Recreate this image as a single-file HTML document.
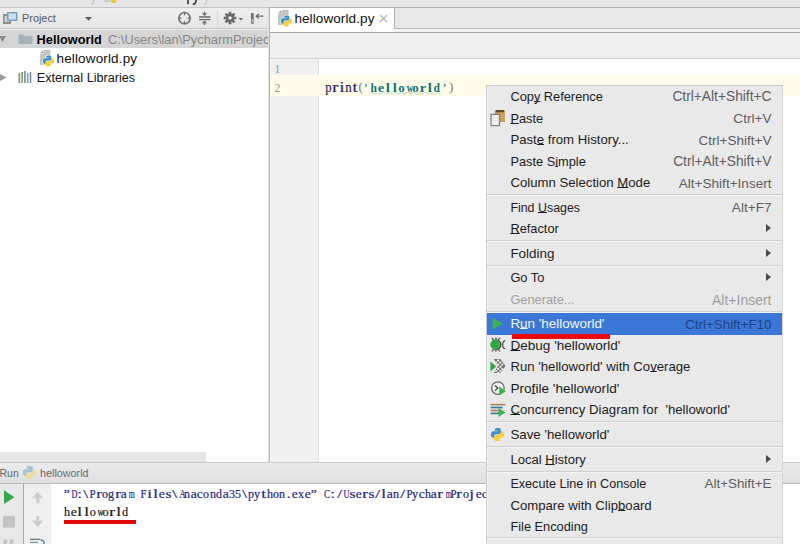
<!DOCTYPE html>
<html><head><meta charset="utf-8">
<style>
*{margin:0;padding:0;box-sizing:border-box}
html,body{width:800px;height:544px;overflow:hidden;background:#fff;font-family:"Liberation Sans",sans-serif}
.a{position:absolute}
.t{position:absolute;white-space:nowrap;line-height:20px;height:20px}
.ml{font-size:12.8px}
.ms{font-size:13.2px}
.m{font-family:"Liberation Mono",monospace}
.s{font-family:"Liberation Serif",serif}
.mc i{display:inline-block;text-align:center;font-style:normal}
.mc b{display:inline-block;font-weight:inherit;transform-origin:50% 50%}
u{text-decoration:underline;text-decoration-thickness:1px;text-underline-offset:0px;text-decoration-skip-ink:none}
.arr{width:0;height:0;border-left:5px solid #4a4a4a;border-top:4.5px solid transparent;border-bottom:4.5px solid transparent}
svg{position:absolute;overflow:visible}
</style></head><body>

<svg width="0" height="0" style="position:absolute">
<defs>
<symbol id="py" viewBox="0 0 16 16">
<path d="M8 1C5 1 5.2 2.3 5.2 2.3V4H8.1V4.6H3.5C3.5 4.6 1 4.3 1 8C1 11.7 3.2 11.5 3.2 11.5H4.5V9.8C4.5 9.8 4.4 7.6 6.7 7.6H9.5C9.5 7.6 11.6 7.7 11.6 5.5V2.7C11.6 2.7 12 1 8 1Z" fill="#4492c2"/>
<path d="M8 15C11 15 10.8 13.7 10.8 13.7V12H7.9V11.4H12.5C12.5 11.4 15 11.7 15 8C15 4.3 12.8 4.5 12.8 4.5H11.5V6.2C11.5 6.2 11.6 8.4 9.3 8.4H6.5C6.5 8.4 4.4 8.3 4.4 10.5V13.3C4.4 13.3 4 15 8 15Z" fill="#f7cf33"/>
</symbol>
<symbol id="pyf" viewBox="0 0 15 16" overflow="visible">
<path d="M0 3.5L3.5 0H10.5V15H0Z" fill="#c4c4c4"/>
<path d="M0 3.5H3.5V0Z" fill="#9a9a9a"/>
<path d="M0 3.5H3.5V0" fill="none" stroke="#fff" stroke-width="0.6"/>
<g transform="translate(2.2 4.6) scale(0.7875)"><use href="#py" width="16" height="16" stroke="#fff" stroke-width="1.6" stroke-opacity="0.8"/><use href="#py" width="16" height="16"/></g>
</symbol>
<pattern id="chk" width="2.4" height="2.4" patternUnits="userSpaceOnUse" patternTransform="rotate(45)">
<rect width="2.4" height="2.4" fill="#f4f4f4"/><rect width="1.2" height="1.2" fill="#5e5e5e"/><rect x="1.2" y="1.2" width="1.2" height="1.2" fill="#5e5e5e"/>
</pattern>
</defs>
</svg>
<!-- top strip -->
<div class="a" style="left:0;top:0;width:800px;height:8px;background:#e7e7e7"></div>
<div class="a" style="left:0;top:7px;width:269px;height:1px;background:#c4c4c4"></div><div class="a" style="left:269px;top:7px;width:531px;height:1px;background:#b0b0b0"></div>
<svg style="left:0;top:0" width="800" height="8">
<path d="M94.5 -1 L92 5" stroke="#b5b5b5" stroke-width="1" fill="none"/>
<rect x="104" y="0" width="6" height="2.2" fill="#cdcdcd"/>
<circle cx="113.5" cy="0.3" r="2.9" fill="#f3c232"/>
<path d="M188 0 v4.3" stroke="#2a2a2a" stroke-width="1.5"/>
<path d="M196.2 0 q-0.4 4.3 -3.4 4.3" stroke="#2a2a2a" stroke-width="1.5" fill="none"/>
<path d="M207.5 -1 L205 5" stroke="#b8b8b8" stroke-width="1" fill="none"/>
</svg>

<!-- project header -->
<div class="a" style="left:0;top:8px;width:269px;height:21px;background:linear-gradient(#eeeeee,#e4e4e4)"></div>
<div class="a" style="left:0;top:28px;width:269px;height:1px;background:#c4c4c4"></div>
<div class="a" style="left:0;top:29px;width:269px;height:1px;background:#eeeeee"></div>
<svg style="left:0;top:8px" width="269" height="21">
<!-- project icon -->
<rect x="3" y="6" width="8" height="10" fill="#8d8d8d"/>
<rect x="4.5" y="8" width="4.5" height="6" fill="#cfcfcf"/>
<rect x="7" y="4" width="10.5" height="9" fill="#7aa2b9"/>
<rect x="8.5" y="5.5" width="7.5" height="6" fill="#c9dfea"/>
<!-- dropdown -->
<path d="M85 9 h7 l-3.5 3.8z" fill="#5a5a5a"/>
<!-- crosshair -->
<circle cx="184.5" cy="10.2" r="5.6" stroke="#6a6a6a" stroke-width="1.5" fill="none"/>
<path d="M184.5 4.6 v2.6 M184.5 13.2 v2.6 M178.9 10.2 h2.6 M187.5 10.2 h2.6" stroke="#6a6a6a" stroke-width="1.3"/>
<!-- collapse -->
<path d="M199 9 h11.5 M199 11.6 h11.5" stroke="#6a6a6a" stroke-width="1.3"/>
<path d="M201.8 5.3 h5.4 l-2.7 2.6z M201.8 15.2 h5.4 l-2.7 -2.6z" fill="#6a6a6a"/>
<path d="M204.5 3.5 v2.5 M204.5 14.5 v2.6" stroke="#6a6a6a" stroke-width="1.2"/>
<!-- separator -->
<path d="M217.5 3 v16" stroke="#d2d2d2" stroke-width="1"/>
<!-- gear -->
<g transform="translate(230 10)" fill="#6a6a6a">
<circle r="4.3"/>
<rect x="-1.3" y="-6.3" width="2.6" height="12.6"/>
<rect x="-1.3" y="-6.3" width="2.6" height="12.6" transform="rotate(45)"/>
<rect x="-1.3" y="-6.3" width="2.6" height="12.6" transform="rotate(90)"/>
<rect x="-1.3" y="-6.3" width="2.6" height="12.6" transform="rotate(135)"/>
<circle r="1.8" fill="#ebebeb"/>
</g>
<path d="M238.5 10 h4.5 l-2.25 2.5z" fill="#6a6a6a"/>
<!-- hide -->
<rect x="251" y="5" width="2.6" height="10.8" fill="#6e6e6e"/>
<rect x="251.8" y="11" width="1.1" height="3.5" fill="#cfcfcf"/>
<path d="M256 8.2 h7.5 M258.8 5.8 l-2.6 2.4 l2.6 2.4" stroke="#6e6e6e" stroke-width="1.2" fill="none"/>
</svg>
<div class="t" style="left:22px;top:8.3px;font-size:10.9px;color:#585858">Project</div>

<!-- project tree -->
<div class="a" style="left:0;top:30px;width:269px;height:18px;background:#d5d5d5"></div>
<svg style="left:0;top:30px" width="269" height="60">
<path d="M-1 6 h7 l-3.5 6z" fill="#8a8a8a"/>
<path d="M18.5 4.5 h5 l1.5 1.5 h7.5 v8 h-14z" fill="#a6b2ba"/>
<path d="M0 44 l6.5 3.5 l-6.5 3.5z" fill="#9a9a9a"/>
<!-- library icon -->
<rect x="18.5" y="43" width="1.6" height="10" fill="#8a8a8a"/>
<rect x="21.3" y="42" width="1.6" height="11" fill="#62a85e"/>
<rect x="24.1" y="41" width="1.6" height="12" fill="#8a8a8a"/>
<rect x="26.9" y="43" width="1.6" height="10" fill="#5fb0d8"/>
<rect x="29.7" y="42" width="1.6" height="11" fill="#8a8a8a"/>
</svg>
<div class="t" style="left:36.6px;top:29.5px;font-size:12.75px;font-weight:bold;color:#000">Helloworld</div>
<div class="t" style="left:108px;top:29.6px;font-size:12.85px;color:#858585">C:\Users\lan\PycharmProjec</div>
<div class="t" style="left:56.5px;top:48.8px;font-size:13.5px;letter-spacing:0.15px;color:#111">helloworld.py</div>
<div class="t" style="left:36.8px;top:67.6px;font-size:12.65px;color:#111">External Libraries</div>

<!-- divider -->
<div class="a" style="left:268px;top:8px;width:1px;height:455px;background:#e2e2e2"></div>
<div class="a" style="left:269px;top:8px;width:1px;height:455px;background:#b2b2b2"></div>

<!-- editor tabs -->
<div class="a" style="left:270px;top:8px;width:530px;height:21px;background:#e8e8e8"></div>
<div class="a" style="left:270px;top:29px;width:530px;height:3px;background:#f2f2f2"></div>
<div class="a" style="left:270px;top:8px;width:125px;height:24px;background:#fff"></div>
<div class="a" style="left:394px;top:8px;width:1px;height:21px;background:#b4b4b4"></div>
<div class="a" style="left:395px;top:28px;width:405px;height:1px;background:#b8b8b8"></div>
<div class="a" style="left:270px;top:32px;width:530px;height:1px;background:#a9a9a9"></div>
<div class="t" style="left:294.4px;top:8.8px;font-size:13.5px;letter-spacing:0.1px;color:#111">helloworld.py</div>
<svg style="left:0;top:0" width="800" height="40">
<path d="M380 15.2 l7 7 M387 15.2 l-7 7" stroke="#a8a8a8" stroke-width="1.1"/>
</svg>

<!-- breadcrumb area -->
<div class="a" style="left:270px;top:33px;width:530px;height:25px;background:#efefef"></div>
<div class="a" style="left:270px;top:58px;width:530px;height:1px;background:#d6d6d6"></div>

<!-- gutter -->
<div class="a" style="left:270px;top:59px;width:48px;height:404px;background:#f0f0f0"></div><div class="a" style="left:270px;top:59px;width:1px;height:404px;background:#fafafa"></div>
<div class="a" style="left:318px;top:59px;width:1px;height:404px;background:#e0e0e0"></div>
<div class="a" style="left:270px;top:75px;width:530px;height:20.5px;background:#fefbe8"></div>
<div class="t s" style="left:274.5px;top:59px;font-size:12px;color:#9a9a9a">1</div>
<div class="t s" style="left:274.5px;top:77.6px;font-size:12px;color:#9a9a9a">2</div>
<div class="t s mc" style="left:324.7px;top:77.9px;font-size:13.8px;color:#22205a;-webkit-text-stroke:0.15px #22205a"><i style="width:6.750px"><b style="transform:scaleX(0.929)">p</b></i><i style="width:6.750px"><b style="transform:scaleX(1.300)">r</b></i><i style="width:6.750px"><b style="transform:scaleX(1.300)">i</b></i><i style="width:6.750px"><b style="transform:scaleX(0.929)">n</b></i><i style="width:6.750px"><b style="transform:scaleX(1.300)">t</b></i></div><div class="t s" style="left:358.6px;top:76.9px;font-size:12.8px;color:#707070">(</div>
<div class="t s" style="left:363.4px;top:77.9px;font-size:13.5px;color:#0e7570">&#8217;</div>
<div class="t s mc" style="left:370.2px;top:77.9px;font-size:13.5px;font-weight:bold;color:#0e7575"><i style="width:7.000px"><b style="transform:scaleX(0.858)">h</b></i><i style="width:7.000px"><b style="transform:scaleX(1.075)">e</b></i><i style="width:7.000px"><b style="transform:scaleX(1.100)">l</b></i><i style="width:7.000px"><b style="transform:scaleX(1.100)">l</b></i><i style="width:7.000px"><b style="transform:scaleX(0.954)">o</b></i><i style="width:7.000px"><b style="transform:scaleX(0.661)">w</b></i><i style="width:7.000px"><b style="transform:scaleX(0.954)">o</b></i><i style="width:7.000px"><b style="transform:scaleX(1.075)">r</b></i><i style="width:7.000px"><b style="transform:scaleX(1.100)">l</b></i><i style="width:7.000px"><b style="transform:scaleX(0.858)">d</b></i></div>
<div class="t s" style="left:442.2px;top:77.6px;font-size:13.5px;color:#0e7570">&#8217;</div><div class="t s" style="left:448.9px;top:76.9px;font-size:12.8px;color:#707070">)</div>
<svg style="left:370px;top:92px" width="74" height="4"><path d="M0 1.5 L1.5 0.5 L4.5 2.2 L7.5 0.5 L10.5 2.2 L13.5 0.5 L16.5 2.2 L19.5 0.5 L22.5 2.2 L25.5 0.5 L28.5 2.2 L31.5 0.5 L34.5 2.2 L37.5 0.5 L40.5 2.2 L43.5 0.5 L46.5 2.2 L49.5 0.5 L52.5 2.2 L55.5 0.5 L58.5 2.2 L61.5 0.5 L64.5 2.2 L67.5 0.5 L70.5 2.2" stroke="#b8d8c0" stroke-width="0.9" fill="none"/></svg>

<!-- run panel -->
<div class="a" style="left:0;top:452px;width:206px;height:11px;background:#e6e6e6"></div>
<div class="a" style="left:0;top:462px;width:800px;height:1px;background:#c8c8c8"></div>
<div class="a" style="left:0;top:463px;width:800px;height:20px;background:linear-gradient(#ebebeb,#dfdfdf)"></div>
<div class="a" style="left:0;top:483px;width:800px;height:1px;background:#b8b8b8"></div>
<div class="a" style="left:0;top:484px;width:23px;height:60px;background:#e8e8e8"></div>
<div class="a" style="left:22.5px;top:484px;width:1px;height:60px;background:#a8a8a8"></div>
<div class="a" style="left:24px;top:484px;width:27px;height:60px;background:#efefef"></div>
<div class="t" style="left:-0.5px;top:462.8px;font-size:10.5px;color:#666">Run</div>
<div class="t" style="left:40px;top:462.8px;font-size:10.8px;color:#6b6b6b">helloworld</div>
<svg style="left:0;top:484px" width="60" height="60">
<path d="M4 6.3 L14.4 13.2 L4 20.1Z" fill="#35a64a"/>
<rect x="3" y="31.9" width="11.9" height="11.7" fill="#c2c2c2"/>
<rect x="3.5" y="55.5" width="3.5" height="6" fill="#c4c4c4"/><rect x="9.8" y="55.5" width="3.5" height="6" fill="#c4c4c4"/>
<path d="M32 14.3 L37.8 7.9 L43.2 14.3Z M36.2 14 h3.2 v5.3 h-3.2z" fill="#cdcdcd"/>
<path d="M32 36.6 L37.8 43 L43.2 36.6Z M36.2 31.9 h3.2 v5 h-3.2z" fill="#cdcdcd"/>
<path d="M30 55.3 h10" stroke="#6a6a6a" stroke-width="1.2"/>
<path d="M30 58.3 h8 M30 61 h6" stroke="#7a9ab8" stroke-width="1.2"/>
<path d="M40.5 56 q3.5 0 3.5 2.8 q0 2.8 -3.5 2.8" stroke="#4a88c8" stroke-width="1.4" fill="none"/>
</svg>
<div class="t s mc" style="left:64px;top:483.85px;font-size:12.3px;color:#262680;-webkit-text-stroke:0.2px #262680"><i style="width:6.330px"><b style="transform:scaleX(1.102)">”</b></i><i style="width:6.330px"><b style="transform:scaleX(0.677)">D</b></i><i style="width:6.330px"><b style="transform:scaleX(1.400)">:</b></i><i style="width:6.330px"><b style="transform:scaleX(1.400)">\</b></i><i style="width:6.330px"><b style="transform:scaleX(0.879)">P</b></i><i style="width:6.330px"><b style="transform:scaleX(1.400)">r</b></i><i style="width:6.330px"><b style="transform:scaleX(0.978)">o</b></i><i style="width:6.330px"><b style="transform:scaleX(0.978)">g</b></i><i style="width:6.330px"><b style="transform:scaleX(1.400)">r</b></i><i style="width:6.330px"><b style="transform:scaleX(1.102)">a</b></i><i style="width:6.330px"><b style="transform:scaleX(0.629)">m</b></i><i style="width:6.330px"><b style="transform:scaleX(1.400)">&nbsp;</b></i><i style="width:6.330px"><b style="transform:scaleX(0.879)">F</b></i><i style="width:6.330px"><b style="transform:scaleX(1.400)">i</b></i><i style="width:6.330px"><b style="transform:scaleX(1.400)">l</b></i><i style="width:6.330px"><b style="transform:scaleX(1.102)">e</b></i><i style="width:6.330px"><b style="transform:scaleX(1.256)">s</b></i><i style="width:6.330px"><b style="transform:scaleX(1.400)">\</b></i><i style="width:6.330px"><b style="transform:scaleX(0.677)">A</b></i><i style="width:6.330px"><b style="transform:scaleX(0.978)">n</b></i><i style="width:6.330px"><b style="transform:scaleX(1.102)">a</b></i><i style="width:6.330px"><b style="transform:scaleX(1.102)">c</b></i><i style="width:6.330px"><b style="transform:scaleX(0.978)">o</b></i><i style="width:6.330px"><b style="transform:scaleX(0.978)">n</b></i><i style="width:6.330px"><b style="transform:scaleX(0.978)">d</b></i><i style="width:6.330px"><b style="transform:scaleX(1.102)">a</b></i><i style="width:6.330px"><b style="transform:scaleX(0.978)">3</b></i><i style="width:6.330px"><b style="transform:scaleX(0.978)">5</b></i><i style="width:6.330px"><b style="transform:scaleX(1.400)">\</b></i><i style="width:6.330px"><b style="transform:scaleX(0.978)">p</b></i><i style="width:6.330px"><b style="transform:scaleX(0.978)">y</b></i><i style="width:6.330px"><b style="transform:scaleX(1.400)">t</b></i><i style="width:6.330px"><b style="transform:scaleX(0.978)">h</b></i><i style="width:6.330px"><b style="transform:scaleX(0.978)">o</b></i><i style="width:6.330px"><b style="transform:scaleX(0.978)">n</b></i><i style="width:6.330px"><b style="transform:scaleX(1.400)">.</b></i><i style="width:6.330px"><b style="transform:scaleX(1.102)">e</b></i><i style="width:6.330px"><b style="transform:scaleX(0.978)">x</b></i><i style="width:6.330px"><b style="transform:scaleX(1.102)">e</b></i><i style="width:6.330px"><b style="transform:scaleX(1.102)">”</b></i><i style="width:6.330px"><b style="transform:scaleX(1.400)">&nbsp;</b></i><i style="width:6.330px"><b style="transform:scaleX(0.733)">C</b></i><i style="width:6.330px"><b style="transform:scaleX(1.400)">:</b></i><i style="width:6.330px"><b style="transform:scaleX(1.400)">/</b></i><i style="width:6.330px"><b style="transform:scaleX(0.677)">U</b></i><i style="width:6.330px"><b style="transform:scaleX(1.256)">s</b></i><i style="width:6.330px"><b style="transform:scaleX(1.102)">e</b></i><i style="width:6.330px"><b style="transform:scaleX(1.400)">r</b></i><i style="width:6.330px"><b style="transform:scaleX(1.256)">s</b></i><i style="width:6.330px"><b style="transform:scaleX(1.400)">/</b></i><i style="width:6.330px"><b style="transform:scaleX(1.400)">l</b></i><i style="width:6.330px"><b style="transform:scaleX(1.102)">a</b></i><i style="width:6.330px"><b style="transform:scaleX(0.978)">n</b></i><i style="width:6.330px"><b style="transform:scaleX(1.400)">/</b></i><i style="width:6.330px"><b style="transform:scaleX(0.879)">P</b></i><i style="width:6.330px"><b style="transform:scaleX(0.978)">y</b></i><i style="width:6.330px"><b style="transform:scaleX(1.102)">c</b></i><i style="width:6.330px"><b style="transform:scaleX(0.978)">h</b></i><i style="width:6.330px"><b style="transform:scaleX(1.102)">a</b></i><i style="width:6.330px"><b style="transform:scaleX(1.400)">r</b></i><i style="width:6.330px"><b style="transform:scaleX(0.629)">m</b></i><i style="width:6.330px"><b style="transform:scaleX(0.879)">P</b></i><i style="width:6.330px"><b style="transform:scaleX(1.400)">r</b></i><i style="width:6.330px"><b style="transform:scaleX(0.978)">o</b></i><i style="width:6.330px"><b style="transform:scaleX(1.400)">j</b></i><i style="width:6.330px"><b style="transform:scaleX(1.102)">e</b></i><i style="width:6.330px"><b style="transform:scaleX(1.102)">c</b></i><i style="width:6.330px"><b style="transform:scaleX(1.400)">t</b></i><i style="width:6.330px"><b style="transform:scaleX(1.256)">s</b></i></div>
<div class="t s mc" style="left:63.8px;top:501.85px;font-size:12.3px;color:#1a1a1a;-webkit-text-stroke:0.2px #1a1a1a"><i style="width:6.450px">h</i><i style="width:6.450px"><b style="transform:scaleX(1.122)">e</b></i><i style="width:6.450px"><b style="transform:scaleX(1.400)">l</b></i><i style="width:6.450px"><b style="transform:scaleX(1.400)">l</b></i><i style="width:6.450px">o</i><i style="width:6.450px"><b style="transform:scaleX(0.690)">w</b></i><i style="width:6.450px">o</i><i style="width:6.450px"><b style="transform:scaleX(1.400)">r</b></i><i style="width:6.450px"><b style="transform:scaleX(1.400)">l</b></i><i style="width:6.450px">d</i></div>
<div class="a" style="left:64px;top:520px;width:72px;height:3.5px;background:#e00a0a"></div>

<!-- tree/tab/run python icons -->
<svg style="left:39.5px;top:50px" width="16" height="18"><use href="#pyf" width="15" height="16"/></svg>
<svg style="left:278px;top:10px" width="15" height="16"><use href="#pyf" width="15" height="16"/></svg>
<svg style="left:21.5px;top:465px;opacity:0.42" width="15" height="15"><use href="#py" width="15" height="15"/></svg>


<!-- context menu -->
<div class="a" style="left:486px;top:85px;width:297px;height:459px;background:#e9e9e9;border:1px solid #c9c9c9;border-right-color:#d6d6d6;border-bottom:none"></div>
<div class="a" style="left:487px;top:86px;width:1px;height:458px;background:#f2f2f2"></div>
<div class="t ml" style="left:510.4px;top:87.26px;font-size:12.80px;color:#1c1c1c">Cop<u>y</u> Reference</div>
<div class="t ms" style="right:28.5px;top:87.42px;font-size:13.78px;color:#5e5e5e">Ctrl+Alt+Shift+C</div>
<div class="t ml" style="left:510.4px;top:108.76px;font-size:12.80px;color:#1c1c1c"><u>P</u>aste</div>
<div class="t ms" style="right:28.5px;top:108.99px;font-size:13.60px;color:#5e5e5e">Ctrl+V</div>
<div class="t ml" style="left:510.4px;top:130.13px;font-size:13.18px;color:#1c1c1c">Past<u>e</u> from History...</div>
<div class="t ms" style="right:28.5px;top:130.51px;font-size:13.54px;color:#5e5e5e">Ctrl+Shift+V</div>
<div class="t ml" style="left:510.4px;top:151.76px;font-size:12.80px;color:#1c1c1c">Paste S<u>i</u>mple</div>
<div class="t ms" style="right:28.5px;top:151.92px;font-size:13.78px;color:#5e5e5e">Ctrl+Alt+Shift+V</div>
<div class="t ml" style="left:510.4px;top:173.13px;font-size:13.18px;color:#1c1c1c">Column Selection <u>M</u>ode</div>
<div class="t ms" style="right:28.5px;top:173.50px;font-size:13.57px;color:#5e5e5e">Alt+Shift+Insert</div>
<div class="t ml" style="left:510.4px;top:197.96px;font-size:12.42px;color:#1c1c1c">Find <u>U</u>sages</div>
<div class="t ms" style="right:28.5px;top:198.05px;font-size:13.60px;color:#5e5e5e">Alt+F7</div>
<div class="t ml" style="left:510.4px;top:219.32px;font-size:12.80px;color:#1c1c1c"><u>R</u>efactor</div>
<div class="a arr" style="left:766px;top:224.2px"></div>
<div class="t ml" style="left:510.4px;top:243.66px;font-size:13.44px;color:#1c1c1c">Folding</div>
<div class="a arr" style="left:766px;top:248.7px"></div>
<div class="t ml" style="left:510.4px;top:268.44px;font-size:12.80px;color:#1c1c1c">Go To</div>
<div class="a arr" style="left:766px;top:273.3px"></div>
<div class="t ml" style="left:510.4px;top:289.94px;font-size:12.80px;color:#a0a0a0">Generate...</div>
<div class="t ms" style="right:28.5px;top:290.03px;font-size:13.99px;color:#a0a0a0">Alt+Insert</div>
<div class="a" style="left:487px;top:313.1px;width:295px;height:21.5px;background:#3a77d6"></div>
<div class="t ml" style="left:510.4px;top:314.28px;font-size:13.44px;color:#f4f8ff">R<u>u</u>n 'helloworld'</div>
<div class="t ms" style="right:28.5px;top:314.79px;font-size:13.42px;color:#1d4585">Ctrl+Shift+F10</div>
<div class="t ml" style="left:510.4px;top:335.74px;font-size:13.57px;color:#1c1c1c"><u>D</u>ebug 'helloworld'</div>
<div class="t ml" style="left:510.4px;top:357.37px;font-size:13.18px;color:#1c1c1c">Run 'helloworld' with Co<u>v</u>erage</div>
<div class="t ml" style="left:510.4px;top:378.72px;font-size:13.63px;color:#1c1c1c">Pro<u>f</u>ile 'helloworld'</div>
<div class="t ml" style="left:510.4px;top:400.36px;font-size:13.22px;color:#1c1c1c"><u>C</u>oncurrency Diagram for&nbsp; 'helloworld'</div>
<div class="t ml" style="left:510.4px;top:424.89px;font-size:13.31px;color:#1c1c1c">Save 'helloworld'</div>
<div class="t ml" style="left:510.4px;top:449.54px;font-size:13.06px;color:#1c1c1c">Local <u>H</u>istory</div>
<div class="a arr" style="left:766px;top:454.5px"></div>
<div class="t ml" style="left:510.4px;top:474.25px;font-size:12.61px;color:#1c1c1c">Execute Line in Console</div>
<div class="t ms" style="right:28.5px;top:474.48px;font-size:13.40px;color:#5e5e5e">Alt+Shift+E</div>
<div class="t ml" style="left:510.4px;top:495.55px;font-size:13.18px;color:#1c1c1c">Compare with Clip<u>b</u>oard</div>
<div class="t ml" style="left:510.4px;top:517.18px;font-size:12.80px;color:#1c1c1c">File Encoding</div>
<div class="a" style="left:487px;top:194px;width:295px;height:1px;background:#d0d0d0"></div><div class="a" style="left:487px;top:195px;width:295px;height:1px;background:#f3f3f3"></div>
<div class="a" style="left:487px;top:240px;width:295px;height:1px;background:#d0d0d0"></div><div class="a" style="left:487px;top:241px;width:295px;height:1px;background:#f3f3f3"></div>
<div class="a" style="left:487px;top:265px;width:295px;height:1px;background:#d0d0d0"></div><div class="a" style="left:487px;top:266px;width:295px;height:1px;background:#f3f3f3"></div>
<div class="a" style="left:487px;top:311px;width:295px;height:1px;background:#d0d0d0"></div><div class="a" style="left:487px;top:312px;width:295px;height:1px;background:#f3f3f3"></div>
<div class="a" style="left:487px;top:421px;width:295px;height:1px;background:#d0d0d0"></div><div class="a" style="left:487px;top:422px;width:295px;height:1px;background:#f3f3f3"></div>
<div class="a" style="left:487px;top:446px;width:295px;height:1px;background:#d0d0d0"></div><div class="a" style="left:487px;top:447px;width:295px;height:1px;background:#f3f3f3"></div>
<div class="a" style="left:487px;top:471px;width:295px;height:1px;background:#d0d0d0"></div><div class="a" style="left:487px;top:472px;width:295px;height:1px;background:#f3f3f3"></div>
<div class="a" style="left:487px;top:537px;width:295px;height:1px;background:#d0d0d0"></div><div class="a" style="left:487px;top:538px;width:295px;height:1px;background:#f3f3f3"></div>


<svg style="left:486px;top:85px" width="30" height="459">
<!-- paste -->
<rect x="8.8" y="25.2" width="10.2" height="11.8" fill="#c9a060"/>
<rect x="9.6" y="25" width="8.6" height="2.3" rx="1" fill="#5e4c3a"/>
<rect x="5.1" y="29.4" width="8.4" height="11.2" fill="#f2f2f2" stroke="#828282" stroke-width="1.3"/>
<path d="M7 33 h4.5 M7 35.5 h4.5" stroke="#d8d8d8" stroke-width="0.8"/>
<!-- run -->
<path d="M6.6 232.7 L16.5 238.6 L6.6 244.8Z" fill="#3cb44c"/>
<!-- debug -->
<g stroke="#505050" stroke-width="1.3" fill="none">
<path d="M5.8 253 l2 2 M9.9 252.6 v2.2 M14 253 l-2 2 M5.8 266.4 l2 -2 M9.9 266.8 v-2.2 M14 266.4 l-2 -2"/>
<path d="M19.3 255.8 q-2.6 0 -2.6 3.9 q0 3.9 2.6 3.9"/>
</g>
<circle cx="10.3" cy="259.6" r="5.2" fill="#3a3a3a"/>
<circle cx="9.2" cy="259.6" r="4.9" fill="#2ea843"/>
<path d="M11.6 255.6 a4.9 4.9 0 0 1 0 8" stroke="#7fd08a" stroke-width="0.6" fill="none"/>
<!-- coverage -->
<clipPath id="cvc"><path d="M8 274 L14.3 274 L19.5 281 L14.3 288 L8 288 L12 281Z"/></clipPath>
<rect x="7" y="273" width="14" height="16" fill="#6a6a6a" clip-path="url(#cvc)"/>
<g fill="#f6f6f6" clip-path="url(#cvc)">
<rect x="9.2" y="276.5" width="2" height="2"/><rect x="13.3" y="276.5" width="2" height="2"/>
<rect x="11.2" y="278.6" width="2" height="2"/><rect x="15.3" y="278.6" width="2" height="2"/>
<rect x="9.2" y="280.7" width="2" height="2"/><rect x="13.3" y="280.7" width="2" height="2"/>
<rect x="11.2" y="282.8" width="2" height="2"/><rect x="15.3" y="282.8" width="2" height="2"/>
<rect x="9.2" y="284.9" width="2" height="2"/><rect x="13.3" y="284.9" width="2" height="2"/>
<rect x="11.2" y="274.4" width="2" height="2"/><rect x="11.2" y="287" width="2" height="2"/>
</g>
<path d="M4.4 276.5 L10.3 281.4 L4.4 286.4Z" fill="#2ea843"/>
<!-- profile -->
<circle cx="11.9" cy="303.1" r="6.3" fill="#f2f2f2" stroke="#666" stroke-width="1.3"/>
<path d="M9 300.6 l2.7 2.5 l-2.7 2.6" stroke="#444" stroke-width="1.3" fill="none"/>
<path d="M13.2 301.6 L20 306.2 L13.2 310.3Z" fill="#3cb44c"/>
<!-- concurrency -->
<path d="M4.5 319.6 h15" stroke="#a88558" stroke-width="1.6"/>
<path d="M4.7 322.5 h11.8" stroke="#3f7392" stroke-width="1.6"/>
<path d="M4.7 325.5 h8.3" stroke="#a88558" stroke-width="1.6"/>
<path d="M4.7 328.4 h8.3" stroke="#3f7392" stroke-width="1.6"/>
<path d="M12.5 322.9 L19.5 327.3 L12.5 331.9Z" fill="#3cb44c"/>
<!-- save -->
<use href="#py" x="4" y="342" width="15" height="15"/>
</svg>


<div class="a" style="left:512px;top:334px;width:98px;height:4.6px;background:#ea0a0a"></div>
</body></html>
